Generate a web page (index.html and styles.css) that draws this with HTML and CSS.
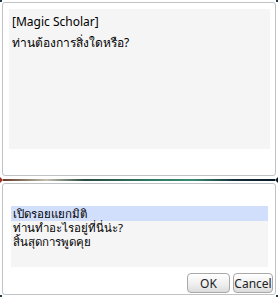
FILE: index.html
```html
<!DOCTYPE html>
<html>
<head>
<meta charset="utf-8">
<link rel="stylesheet" href="styles.css">
</head>
<body>
<div class="screen">
  <div class="panel top">
    <div class="msg">
      <div class="line">[Magic Scholar]</div>
      <div class="line">ท่านต้องการสิ่งใดหรือ?</div>
    </div>
  </div>
  <div class="divider"><span class="arrow left"></span><span class="bar"></span><span class="arrow right"></span></div>
  <div class="panel bottom">
    <div class="list">
      <div class="item sel">เปิดรอยแยกมิติ</div>
      <div class="item">ท่านทำอะไรอยู่ที่นี่น่ะ?</div>
      <div class="item">สิ้นสุดการพูดคุย</div>
    </div>
    <div class="buttons">
      <button class="btn ok">OK</button>
      <button class="btn cancel">Cancel</button>
    </div>
  </div>
  <span class="corner tl"></span>
  <span class="corner tr"></span>
  <span class="corner bl"></span>
  <span class="corner br"></span>
</div>
</body>
</html>
```
FILE: styles.css
```css
html, body {
  margin: 0;
  padding: 0;
  background: #ffffff;
}
.screen {
  position: relative;
  width: 278px;
  height: 298px;
  padding: 2px 2px 0 2px;
  box-sizing: border-box;
  font-family: "Noto Sans", "DejaVu Sans", sans-serif;
  font-size: 12px;
  color: #000;
}
.panel {
  border: 1px solid #bfc3c6;
  border-radius: 3px;
  background: #fff;
  box-sizing: border-box;
}
.top {
  height: 174px;
  padding: 6px 5px 26px 6px;
}
.msg {
  background: #f5f5f5;
  height: 100%;
  padding: 6px 3px;
  box-sizing: border-box;
}
.line {
  height: 14px;
  line-height: 14px;
  margin-bottom: 7px;
}
.divider {
  display: flex;
  align-items: center;
  height: 7px;
  margin: 0 -2px;
}
.bar {
  flex: 1;
  height: 2px;
  background: linear-gradient(to right, #6a3a2a 0%, #8a7a6a 8%, #c4bfb0 16%, #2a4a40 30%, #2e7a66 55%, #3a8a72 70%, #16303a 85%, #0a1a24 100%);
}
.arrow {
  width: 0;
  height: 0;
  border-top: 3px solid transparent;
  border-bottom: 3px solid transparent;
}
.arrow.left {
  border-left: 3px solid #a03020;
}
.arrow.right {
  border-right: 3px solid #0a1a24;
}
.bottom {
  height: 112px;
  padding: 22px 7px 0 8px;
  display: flex;
  flex-direction: column;
}
.list {
  background: #f5f5f5;
  height: 61px;
}
.item {
  height: 14px;
  line-height: 14px;
  padding-left: 2px;
  font-size: 11.5px;
}
.item.sel {
  background: #d1defc;
  height: 15px;
  line-height: 15px;
}
.buttons {
  display: flex;
  justify-content: flex-end;
  gap: 3px;
  margin-top: 6px;
  margin-right: -5px;
}
.btn {
  font-family: "Noto Sans", "DejaVu Sans", sans-serif;
  font-size: 12px;
  height: 20px;
  padding: 0;
  border: 1px solid #a8a8a8;
  border-radius: 4px;
  background: linear-gradient(#ffffff, #eeeeee 60%, #dcdcdc);
  color: #222;
}
.ok { width: 43px; }
.cancel { width: 40px; }
.corner {
  position: absolute;
  width: 2px;
  height: 2px;
  background: #1c3a48;
}
.tl { left: 0; top: 0; }
.tr { right: 0; top: 0; }
.bl { left: 0; bottom: 1px; }
.br { right: 0; bottom: 1px; }
```
